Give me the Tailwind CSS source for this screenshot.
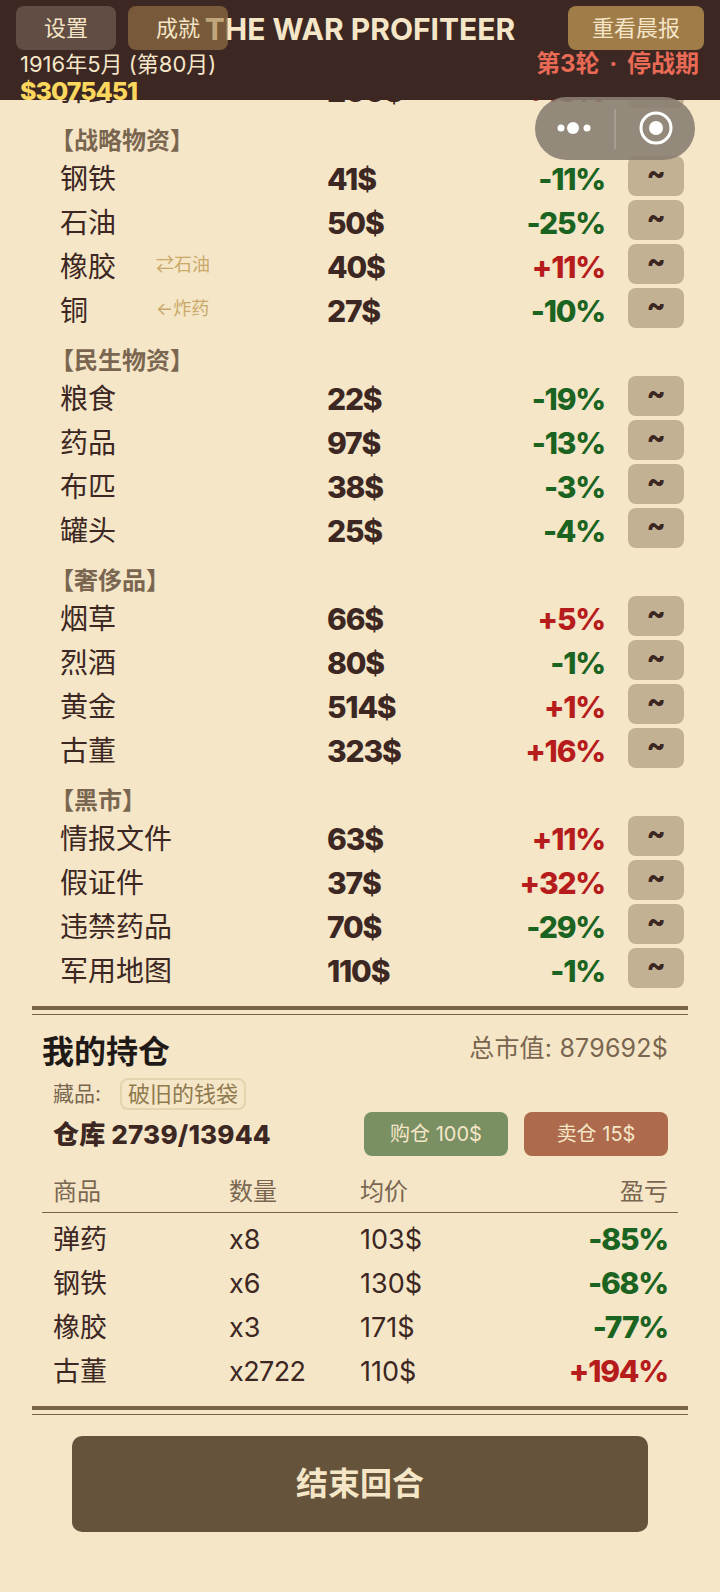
<!DOCTYPE html>
<html lang="zh-CN">
<head>
  <meta charset="UTF-8" />
  <title>The War Profiteer</title>
  <script src="https://cdn.jsdelivr.net/npm/@tailwindcss/browser@4"></script>
</head>
<body class="bg-[#f5e6c8] h-[1592px] w-[720px] overflow-hidden font-['Inter','Noto_Sans_CJK_SC',sans-serif] text-[#3c2723]">

  <header class="relative z-10 h-[100px] bg-[#3c2723] overflow-hidden">
    <h1 class="pt-[10px] text-center text-[30px] leading-[38px] font-bold text-[#f5e6c8]">THE WAR PROFITEER</h1>
    <button class="absolute left-[16px] top-[6px] w-[100px] h-[44px] rounded-[8px] bg-[#f5e6c8]/20 text-[#f5e6c8] text-[22px]">设置</button>
    <button class="absolute left-[128px] top-[6px] w-[100px] h-[44px] rounded-[8px] bg-[#a07c48]/60 text-[#f5e6c8] text-[22px]">成就</button>
    <button class="absolute left-[568px] top-[6px] w-[136px] h-[44px] rounded-[8px] bg-[#a07c48] text-[#f5e6c8] text-[22px]">重看晨报</button>
    <div class="absolute left-[20px] top-[51px] text-[22px] leading-[26px] text-[#f5e6c8]">1916年5月 (第80月)</div>
    <div class="absolute left-[20px] top-[78px] text-[25px] leading-[26px] font-extrabold tracking-[-1px] text-[#fbd85d]">$3075451</div>
    <div class="absolute right-[21px] top-[51px] text-[24px] leading-[26px] font-bold [word-spacing:4px] text-[#e96a55]">第3轮 · 停战期</div>
  </header>

  <main class="-mt-[34px]">
    <section class="pl-[60px] pr-[36px]">
      <div class="flex items-center h-[44px]"><span class="w-[96px] text-[28px] pt-[5px]">弹药</span><span class="w-[171px]"></span><span class="w-[160px] text-[30px] font-extrabold tracking-[-1.2px] pt-[7px]">200$</span><span class="w-[118px] text-right text-[30px] font-extrabold tracking-[-1.2px] pt-[7px] text-[#b71c1c]">+15%</span><button class="ml-[23px] w-[56px] h-[40px] pb-[6px] rounded-[8px] bg-[#c2b192] font-extrabold text-[28px] leading-[28px]">~</button></div>

      <div class="h-[44px] -ml-[10px] flex items-end text-[24px] leading-[26px] font-bold text-[#7a6650]">【战略物资】</div>
      <div class="flex items-center h-[44px]"><span class="w-[96px] text-[28px] pt-[5px]">钢铁</span><span class="w-[171px]"></span><span class="w-[160px] text-[30px] font-extrabold tracking-[-1.2px] pt-[7px]">41$</span><span class="w-[118px] text-right text-[30px] font-extrabold tracking-[-1.2px] pt-[7px] text-[#1b6320]">-11%</span><button class="ml-[23px] w-[56px] h-[40px] pb-[6px] rounded-[8px] bg-[#c2b192] font-extrabold text-[28px] leading-[28px]">~</button></div>
      <div class="flex items-center h-[44px]"><span class="w-[96px] text-[28px] pt-[5px]">石油</span><span class="w-[171px]"></span><span class="w-[160px] text-[30px] font-extrabold tracking-[-1.2px] pt-[7px]">50$</span><span class="w-[118px] text-right text-[30px] font-extrabold tracking-[-1.2px] pt-[7px] text-[#1b6320]">-25%</span><button class="ml-[23px] w-[56px] h-[40px] pb-[6px] rounded-[8px] bg-[#c2b192] font-extrabold text-[28px] leading-[28px]">~</button></div>
      <div class="flex items-center h-[44px]"><span class="w-[96px] text-[28px] pt-[5px]">橡胶</span><span class="w-[171px] text-[18px] text-[#c9a96a]">⇄石油</span><span class="w-[160px] text-[30px] font-extrabold tracking-[-1.2px] pt-[7px]">40$</span><span class="w-[118px] text-right text-[30px] font-extrabold tracking-[-1.2px] pt-[7px] text-[#b71c1c]">+11%</span><button class="ml-[23px] w-[56px] h-[40px] pb-[6px] rounded-[8px] bg-[#c2b192] font-extrabold text-[28px] leading-[28px]">~</button></div>
      <div class="flex items-center h-[44px]"><span class="w-[96px] text-[28px] pt-[5px]">铜</span><span class="w-[171px] text-[18px] text-[#c9a96a]">←炸药</span><span class="w-[160px] text-[30px] font-extrabold tracking-[-1.2px] pt-[7px]">27$</span><span class="w-[118px] text-right text-[30px] font-extrabold tracking-[-1.2px] pt-[7px] text-[#1b6320]">-10%</span><button class="ml-[23px] w-[56px] h-[40px] pb-[6px] rounded-[8px] bg-[#c2b192] font-extrabold text-[28px] leading-[28px]">~</button></div>

      <div class="h-[44px] -ml-[10px] flex items-end text-[24px] leading-[26px] font-bold text-[#7a6650]">【民生物资】</div>
      <div class="flex items-center h-[44px]"><span class="w-[96px] text-[28px] pt-[5px]">粮食</span><span class="w-[171px]"></span><span class="w-[160px] text-[30px] font-extrabold tracking-[-1.2px] pt-[7px]">22$</span><span class="w-[118px] text-right text-[30px] font-extrabold tracking-[-1.2px] pt-[7px] text-[#1b6320]">-19%</span><button class="ml-[23px] w-[56px] h-[40px] pb-[6px] rounded-[8px] bg-[#c2b192] font-extrabold text-[28px] leading-[28px]">~</button></div>
      <div class="flex items-center h-[44px]"><span class="w-[96px] text-[28px] pt-[5px]">药品</span><span class="w-[171px]"></span><span class="w-[160px] text-[30px] font-extrabold tracking-[-1.2px] pt-[7px]">97$</span><span class="w-[118px] text-right text-[30px] font-extrabold tracking-[-1.2px] pt-[7px] text-[#1b6320]">-13%</span><button class="ml-[23px] w-[56px] h-[40px] pb-[6px] rounded-[8px] bg-[#c2b192] font-extrabold text-[28px] leading-[28px]">~</button></div>
      <div class="flex items-center h-[44px]"><span class="w-[96px] text-[28px] pt-[5px]">布匹</span><span class="w-[171px]"></span><span class="w-[160px] text-[30px] font-extrabold tracking-[-1.2px] pt-[7px]">38$</span><span class="w-[118px] text-right text-[30px] font-extrabold tracking-[-1.2px] pt-[7px] text-[#1b6320]">-3%</span><button class="ml-[23px] w-[56px] h-[40px] pb-[6px] rounded-[8px] bg-[#c2b192] font-extrabold text-[28px] leading-[28px]">~</button></div>
      <div class="flex items-center h-[44px]"><span class="w-[96px] text-[28px] pt-[5px]">罐头</span><span class="w-[171px]"></span><span class="w-[160px] text-[30px] font-extrabold tracking-[-1.2px] pt-[7px]">25$</span><span class="w-[118px] text-right text-[30px] font-extrabold tracking-[-1.2px] pt-[7px] text-[#1b6320]">-4%</span><button class="ml-[23px] w-[56px] h-[40px] pb-[6px] rounded-[8px] bg-[#c2b192] font-extrabold text-[28px] leading-[28px]">~</button></div>

      <div class="h-[44px] -ml-[10px] flex items-end text-[24px] leading-[26px] font-bold text-[#7a6650]">【奢侈品】</div>
      <div class="flex items-center h-[44px]"><span class="w-[96px] text-[28px] pt-[5px]">烟草</span><span class="w-[171px]"></span><span class="w-[160px] text-[30px] font-extrabold tracking-[-1.2px] pt-[7px]">66$</span><span class="w-[118px] text-right text-[30px] font-extrabold tracking-[-1.2px] pt-[7px] text-[#b71c1c]">+5%</span><button class="ml-[23px] w-[56px] h-[40px] pb-[6px] rounded-[8px] bg-[#c2b192] font-extrabold text-[28px] leading-[28px]">~</button></div>
      <div class="flex items-center h-[44px]"><span class="w-[96px] text-[28px] pt-[5px]">烈酒</span><span class="w-[171px]"></span><span class="w-[160px] text-[30px] font-extrabold tracking-[-1.2px] pt-[7px]">80$</span><span class="w-[118px] text-right text-[30px] font-extrabold tracking-[-1.2px] pt-[7px] text-[#1b6320]">-1%</span><button class="ml-[23px] w-[56px] h-[40px] pb-[6px] rounded-[8px] bg-[#c2b192] font-extrabold text-[28px] leading-[28px]">~</button></div>
      <div class="flex items-center h-[44px]"><span class="w-[96px] text-[28px] pt-[5px]">黄金</span><span class="w-[171px]"></span><span class="w-[160px] text-[30px] font-extrabold tracking-[-1.2px] pt-[7px]">514$</span><span class="w-[118px] text-right text-[30px] font-extrabold tracking-[-1.2px] pt-[7px] text-[#b71c1c]">+1%</span><button class="ml-[23px] w-[56px] h-[40px] pb-[6px] rounded-[8px] bg-[#c2b192] font-extrabold text-[28px] leading-[28px]">~</button></div>
      <div class="flex items-center h-[44px]"><span class="w-[96px] text-[28px] pt-[5px]">古董</span><span class="w-[171px]"></span><span class="w-[160px] text-[30px] font-extrabold tracking-[-1.2px] pt-[7px]">323$</span><span class="w-[118px] text-right text-[30px] font-extrabold tracking-[-1.2px] pt-[7px] text-[#b71c1c]">+16%</span><button class="ml-[23px] w-[56px] h-[40px] pb-[6px] rounded-[8px] bg-[#c2b192] font-extrabold text-[28px] leading-[28px]">~</button></div>

      <div class="h-[44px] -ml-[10px] flex items-end text-[24px] leading-[26px] font-bold text-[#7a6650]">【黑市】</div>
      <div class="flex items-center h-[44px]"><span class="w-[267px] text-[28px] pt-[5px]">情报文件</span><span class="w-[160px] text-[30px] font-extrabold tracking-[-1.2px] pt-[7px]">63$</span><span class="w-[118px] text-right text-[30px] font-extrabold tracking-[-1.2px] pt-[7px] text-[#b71c1c]">+11%</span><button class="ml-[23px] w-[56px] h-[40px] pb-[6px] rounded-[8px] bg-[#c2b192] font-extrabold text-[28px] leading-[28px]">~</button></div>
      <div class="flex items-center h-[44px]"><span class="w-[267px] text-[28px] pt-[5px]">假证件</span><span class="w-[160px] text-[30px] font-extrabold tracking-[-1.2px] pt-[7px]">37$</span><span class="w-[118px] text-right text-[30px] font-extrabold tracking-[-1.2px] pt-[7px] text-[#b71c1c]">+32%</span><button class="ml-[23px] w-[56px] h-[40px] pb-[6px] rounded-[8px] bg-[#c2b192] font-extrabold text-[28px] leading-[28px]">~</button></div>
      <div class="flex items-center h-[44px]"><span class="w-[267px] text-[28px] pt-[5px]">违禁药品</span><span class="w-[160px] text-[30px] font-extrabold tracking-[-1.2px] pt-[7px]">70$</span><span class="w-[118px] text-right text-[30px] font-extrabold tracking-[-1.2px] pt-[7px] text-[#1b6320]">-29%</span><button class="ml-[23px] w-[56px] h-[40px] pb-[6px] rounded-[8px] bg-[#c2b192] font-extrabold text-[28px] leading-[28px]">~</button></div>
      <div class="flex items-center h-[44px]"><span class="w-[267px] text-[28px] pt-[5px]">军用地图</span><span class="w-[160px] text-[30px] font-extrabold tracking-[-1.2px] pt-[7px]">110$</span><span class="w-[118px] text-right text-[30px] font-extrabold tracking-[-1.2px] pt-[7px] text-[#1b6320]">-1%</span><button class="ml-[23px] w-[56px] h-[40px] pb-[6px] rounded-[8px] bg-[#c2b192] font-extrabold text-[28px] leading-[28px]">~</button></div>
    </section>

    <div class="mx-[32px] mt-[16px] border-t-[4px] border-[#7a6448]"></div>
    <div class="mx-[32px] mt-[4px] border-t border-[#7a6448]"></div>

    <section class="px-[42px]">
      <div class="flex justify-between items-start pr-[10px] pt-[15px]">
        <h2 class="text-[32px] leading-[44px] font-bold text-[#1f1a17]">我的持仓</h2>
        <span class="text-[25px] leading-[36px] tracking-[0.2px] text-[#7a6650]">总市值: 879692$</span>
      </div>
      <div class="pl-[11px] mt-[4px] flex items-center h-[32px]">
        <span class="w-[67px] text-[21px] text-[#7a6650]">藏品:</span>
        <span class="h-[32px] px-[6px] flex items-center rounded-[8px] border-[2px] border-[#e3d4ae] text-[22px] text-[#8f7a4e]">破旧的钱袋</span>
      </div>
      <div class="pl-[11px] pr-[10px] mt-[2px] flex items-center justify-between h-[44px]">
        <span class="text-[26px] tracking-[0.2px] font-extrabold">仓库 2739/13944</span>
        <div class="flex gap-[16px]">
          <button class="w-[144px] h-[44px] rounded-[8px] bg-[#7a9063] text-[#f5e6c8] text-[20px]">购仓 100$</button>
          <button class="w-[144px] h-[44px] rounded-[8px] bg-[#ad6a4c] text-[#f5e6c8] text-[20px]">卖仓 15$</button>
        </div>
      </div>
      <div class="mt-[15px] h-[42px] flex items-center border-b border-[#7a6448] pl-[11px] pr-[10px] text-[24px] text-[#7a6650]">
        <span class="w-[176px]">商品</span><span class="w-[131px]">数量</span><span class="w-[130px]">均价</span><span class="flex-1 text-right">盈亏</span>
      </div>
      <div class="pl-[11px] pr-[10px] pt-[4px]">
        <div class="flex items-center h-[44px] text-[27px]"><span class="w-[176px] pt-[2px]">弹药</span><span class="w-[131px] pt-[2px]">x8</span><span class="w-[130px] pt-[2px]">103$</span><span class="flex-1 text-right text-[30px] font-extrabold tracking-[-1.2px] text-[#1b6320]">-85%</span></div>
        <div class="flex items-center h-[44px] text-[27px]"><span class="w-[176px] pt-[2px]">钢铁</span><span class="w-[131px] pt-[2px]">x6</span><span class="w-[130px] pt-[2px]">130$</span><span class="flex-1 text-right text-[30px] font-extrabold tracking-[-1.2px] text-[#1b6320]">-68%</span></div>
        <div class="flex items-center h-[44px] text-[27px]"><span class="w-[176px] pt-[2px]">橡胶</span><span class="w-[131px] pt-[2px]">x3</span><span class="w-[130px] pt-[2px]">171$</span><span class="flex-1 text-right text-[30px] font-extrabold tracking-[-1.2px] text-[#1b6320]">-77%</span></div>
        <div class="flex items-center h-[44px] text-[27px]"><span class="w-[176px] pt-[2px]">古董</span><span class="w-[131px] pt-[2px] tracking-[-0.6px]">x2722</span><span class="w-[130px] pt-[2px]">110$</span><span class="flex-1 text-right text-[30px] font-extrabold tracking-[-1.2px] text-[#b71c1c]">+194%</span></div>
      </div>
    </section>

    <div class="mx-[32px] mt-[13px] border-t-[4px] border-[#7a6448]"></div>
    <div class="mx-[32px] mt-[4px] border-t border-[#7a6448]"></div>

    <button class="block mx-auto mt-[21px] w-[576px] h-[96px] rounded-[10px] bg-[#66533b] text-[#f5e6c8] text-[32px] font-bold">结束回合</button>
  </main>

  <div class="absolute z-20 left-[535px] top-[97px] w-[160px] h-[63px] rounded-full bg-[#8a8072]/90 flex items-center">
    <svg width="160" height="63" viewBox="0 0 160 63">
      <circle cx="26" cy="31" r="3.5" fill="#fff"/><circle cx="38" cy="31" r="6" fill="#fff"/><circle cx="52" cy="31" r="3.5" fill="#fff"/>
      <rect x="79.5" y="12" width="1" height="40" fill="#fff" opacity=".35"/>
      <circle cx="121" cy="31" r="15" fill="none" stroke="#fff" stroke-width="3"/><circle cx="121" cy="31" r="7" fill="#fff"/>
    </svg>
  </div>
</body>
</html>
